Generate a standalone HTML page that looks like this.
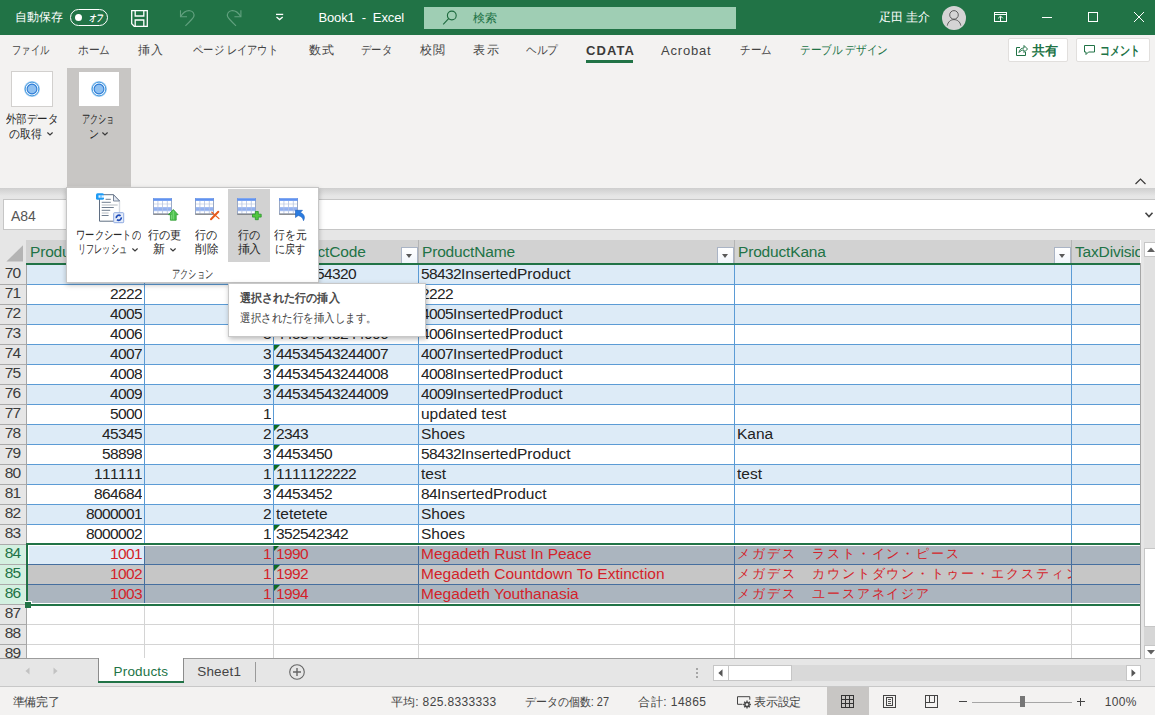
<!DOCTYPE html>
<html lang="ja"><head><meta charset="utf-8"><title>Book1 - Excel</title><style>
*{box-sizing:border-box;margin:0;padding:0}
html,body{width:1155px;height:715px;overflow:hidden;background:#e6e6e6}
body{position:relative;font-family:"Liberation Sans",sans-serif;font-size:12px;color:#444;line-height:1}
.a{position:absolute;white-space:nowrap}
.ui{font-size:12px;color:#444}
.w{color:#fff}
.g{color:#217346}
.b{font-weight:bold}
.c{text-align:center}
.r{text-align:right}
svg{position:absolute;overflow:visible}
/* grid */
.cell{position:absolute;height:19px;line-height:17px;font-size:15.5px;letter-spacing:0;color:#222;white-space:nowrap;overflow:hidden}
.rh{position:absolute;left:0;width:25px;height:19px;line-height:16px;overflow:hidden;font-size:15.5px;letter-spacing:-0.9px;font-kerning:none;text-align:center;color:#3c3c3c}
.hd{position:absolute;top:240px;height:23px;line-height:23px;font-size:15.5px;letter-spacing:-0.17px;color:#217346;white-space:nowrap;overflow:hidden}
.fb{position:absolute;top:247px;width:17px;height:16px;background:linear-gradient(#fff,#f1f5fb);border:1px solid #aab4c5;border-bottom:none}
.fb:after{content:"";position:absolute;left:4px;top:6px;border-left:3.5px solid transparent;border-right:3.5px solid transparent;border-top:4px solid #585858}
.tri{position:absolute;width:0;height:0;border-top:6px solid #0f6b22;border-right:6px solid transparent}
.red{color:#d41f2a}
.n{letter-spacing:-0.62px;font-kerning:none}
</style></head><body>
<div class="a" style="left:0px;top:0px;width:1155px;height:35px;background:#217346;"></div>
<div class="a w" style="left:14.5px;top:11px;font-size:12px;letter-spacing:0.17px">自動保存</div>
<div class="a" style="left:70px;top:9px;width:38px;height:16.5px;border:1px solid #fff;border-radius:9px"></div>
<div class="a" style="left:74.5px;top:13.5px;width:7px;height:7px;border-radius:50%;background:#fff"></div>
<div class="a w b" style="left:88.5px;top:13px;font-size:9.5px;font-style:italic;transform:scaleX(0.725);transform-origin:0 0">オフ</div>
<svg style="left:131px;top:10px" width="17" height="17" viewBox="0 0 17 17" fill="none" stroke="#fff" stroke-width="1.3"><path d="M0.7 0.7h15.6v15.6H3.2L0.7 13.8z"/><path d="M4.2 0.7v5.3h8.6V0.7"/><path d="M4.2 16.3v-6.3h8.6v6.3"/></svg>
<svg style="left:180px;top:10px" width="15" height="16" viewBox="0 0 15 16" fill="none" stroke="#62a17f" stroke-width="1.1"><path d="M0.5 0.2v6.5h6.5"/><path d="M0.7 6.5C3 2.5 6.5 0.3 10 0.7c3 0.4 4.6 3.3 3.8 5.8C13.3 8.3 11 10.5 5.4 15.8"/></svg>
<svg style="left:227px;top:10px" width="15" height="16" viewBox="0 0 15 16" fill="none" stroke="#62a17f" stroke-width="1.1"><path d="M13.9 0.2v6.5H7.4"/><path d="M13.7 6.5C11.4 2.5 7.9 0.3 4.4 0.7 1.4 1.1-0.2 4 0.6 6.5 1.1 8.3 3.4 10.5 9 15.8"/></svg>
<svg style="left:276px;top:13px" width="8" height="8" viewBox="0 0 8 8" fill="none" stroke="#fff" stroke-width="1.3"><path d="M0 1.4h7.2"/><path d="M0.5 4l3.1 2.6L6.7 4"/></svg>
<div class="a w" style="left:318.4px;top:11px;font-size:13px;letter-spacing:-0.12px">Book1&nbsp; -&nbsp; Excel</div>
<div class="a" style="left:424px;top:7px;width:312px;height:22px;background:#9fceb4;"></div>
<svg style="left:442px;top:10px" width="15" height="15" viewBox="0 0 15 15" fill="none" stroke="#1d6a3e" stroke-width="1.1"><circle cx="9.8" cy="5.5" r="4.4"/><path d="M6.6 8.7L1.2 14.4"/></svg>
<div class="a g" style="left:473px;top:12px;font-size:12px;letter-spacing:0px">検索</div>
<div class="a w" style="left:878.7px;top:11px;font-size:12px;letter-spacing:0.11px">疋田 圭介</div>
<div class="a" style="left:942px;top:6px;width:24px;height:24px;border-radius:50%;background:#d4d4d4"></div>
<svg style="left:942px;top:6px" width="24" height="24" viewBox="0 0 24 24" fill="none" stroke="#505050" stroke-width="0.9"><circle cx="12" cy="8.9" r="4.3"/><path d="M5.3 19.6c0.6-3.8 3.4-6 6.7-6s6.2 2.2 6.8 6"/></svg>
<svg style="left:994px;top:12px" width="13" height="10" viewBox="0 0 13 10" fill="none" stroke="#fff" stroke-width="1"><rect x="0.5" y="0.5" width="12" height="9"/><path d="M0.5 2.5h12"/><path d="M6.5 9.5V4.3M4.2 6.3L6.5 4l2.3 2.3"/></svg>
<div class="a" style="left:1042px;top:17px;width:10px;height:1px;background:#fff;"></div>
<div class="a" style="left:1088px;top:12px;width:10px;height:10px;border:1px solid #fff"></div>
<svg style="left:1134px;top:12px" width="10" height="10" viewBox="0 0 10 10" stroke="#fff" stroke-width="1"><path d="M0 0l10 10M10 0L0 10"/></svg>
<div class="a" style="left:0px;top:35px;width:1155px;height:153px;background:#f3f2f1;"></div>
<div class="a ui" style="left:11.8px;top:44px;font-size:12px;transform:scaleX(0.771);transform-origin:0 0">ファイル</div>
<div class="a ui" style="left:77.8px;top:44px;font-size:12px;transform:scaleX(0.894);transform-origin:0 0">ホーム</div>
<div class="a ui" style="left:137.8px;top:44px;font-size:12px;letter-spacing:1.2px">挿入</div>
<div class="a ui" style="left:193px;top:44px;font-size:12px;transform:scaleX(0.856);transform-origin:0 0">ページ レイアウト</div>
<div class="a ui" style="left:308.7px;top:44px;font-size:12px;letter-spacing:0.9px">数式</div>
<div class="a ui" style="left:361px;top:44px;font-size:12px;transform:scaleX(0.861);transform-origin:0 0">データ</div>
<div class="a ui" style="left:419.6px;top:44px;font-size:12px;letter-spacing:1.8px">校閲</div>
<div class="a ui" style="left:473px;top:44px;font-size:12px;letter-spacing:1.6px">表示</div>
<div class="a ui" style="left:526px;top:44px;font-size:12px;transform:scaleX(0.889);transform-origin:0 0">ヘルプ</div>
<div class="a ui" style="left:661px;top:44px;font-size:12px;font-size:13px;letter-spacing:0.8px">Acrobat</div>
<div class="a ui" style="left:740px;top:44px;font-size:12px;transform:scaleX(0.875);transform-origin:0 0">チーム</div>
<div class="a ui" style="left:800px;top:44px;font-size:12px;color:#217346;transform:scaleX(0.886);transform-origin:0 0">テーブル デザイン</div>
<div class="a ui b" style="left:586px;top:44px;font-size:13px;color:#3b3a39;letter-spacing:1.09px">CDATA</div>
<div class="a" style="left:586px;top:60px;width:47px;height:3px;background:#217346;"></div>
<div class="a" style="left:1008px;top:38px;width:60px;height:24px;background:#fff;border:1px solid #e1dfdd;border-radius:2px"></div>
<svg style="left:1016px;top:44px" width="12" height="12" viewBox="0 0 12 12" fill="none" stroke="#217346" stroke-width="1"><path d="M4 3.5H0.5v8h9V8"/><path d="M3 8.5c0.3-3 2.5-4.5 5-4.5V1.5l3.5 3.5-3.5 3.5V6C6 6 4.3 6.8 3 8.5z"/></svg>
<div class="a g b" style="left:1032px;top:45px;font-size:12.5px;letter-spacing:-0.5px">共有</div>
<div class="a" style="left:1076px;top:38px;width:74px;height:24px;background:#fff;border:1px solid #e1dfdd;border-radius:2px"></div>
<svg style="left:1084px;top:45px" width="11" height="11" viewBox="0 0 11 11" fill="none" stroke="#217346" stroke-width="1"><path d="M0.5 0.5h10v6.5H4.5l-2.5 2.5v-2.5H0.5z"/></svg>
<div class="a g b" style="left:1100px;top:45px;font-size:12.5px;transform:scaleX(0.769);transform-origin:0 0">コメント</div>
<div class="a" style="left:11px;top:71px;width:42px;height:36px;background:#fff;border:1px solid #d2d0ce"></div>
<div class="a" style="left:67px;top:68px;width:64px;height:119px;background:#c8c6c4;"></div>
<div class="a" style="left:79px;top:72px;width:40px;height:34px;background:#fff;"></div>
<svg style="left:22.9px;top:79.5px" width="18" height="18" viewBox="0 0 18 18"><circle cx="9" cy="9" r="8" fill="#b9d8f7"/><circle cx="9" cy="9" r="6.9" fill="#eef6fe" stroke="#3c96dc" stroke-width="1"/><circle cx="9" cy="9" r="4.9" fill="#8fc0f0" stroke="#2a7ad6" stroke-width="1.1"/></svg>
<svg style="left:89.8px;top:79.5px" width="18" height="18" viewBox="0 0 18 18"><circle cx="9" cy="9" r="8" fill="#b9d8f7"/><circle cx="9" cy="9" r="6.9" fill="#eef6fe" stroke="#3c96dc" stroke-width="1"/><circle cx="9" cy="9" r="4.9" fill="#8fc0f0" stroke="#2a7ad6" stroke-width="1.1"/></svg>
<div class="a ui" style="left:5.8px;top:113px;font-size:12px;color:#262626;transform:scaleX(0.87);transform-origin:0 0">外部データ</div>
<div class="a ui" style="left:9px;top:128px;font-size:12px;color:#262626;transform:scaleX(0.903);transform-origin:0 0">の取得</div>
<svg style="left:47px;top:131.7px" width="6" height="4" viewBox="0 0 6 4" fill="none" stroke="#3a3a3a" stroke-width="1.2"><path d="M0.4 0.5L3 2.9 5.6 0.5"/></svg>
<div class="a ui" style="left:82.4px;top:113px;font-size:12px;color:#262626;transform:scaleX(0.679);transform-origin:0 0">アクショ</div>
<div class="a ui" style="left:88.6px;top:128px;font-size:12px;color:#262626;transform:scaleX(0.825);transform-origin:0 0">ン</div>
<svg style="left:101.6px;top:131.7px" width="6" height="4" viewBox="0 0 6 4" fill="none" stroke="#3a3a3a" stroke-width="1.2"><path d="M0.4 0.5L3 2.9 5.6 0.5"/></svg>
<svg style="left:1135px;top:178px" width="11" height="7" viewBox="0 0 11 7" fill="none" stroke="#3b3a39" stroke-width="1.2"><path d="M0.5 6L5.5 1l5 5"/></svg>
<div class="a" style="left:0;top:188px;width:1155px;height:8px;background:linear-gradient(#cecece,#e6e6e6)"></div>
<div class="a" style="left:3px;top:199px;width:1160px;height:31px;background:#fff;border:1px solid #c6c6c6"></div>
<div class="a ui" style="left:11px;top:209px;font-size:14px;color:#555;letter-spacing:-0.11px">A84</div>
<svg style="left:1145px;top:212px" width="8" height="6" viewBox="0 0 8 6" fill="none" stroke="#444" stroke-width="1.6"><path d="M0.5 0.8L4 4.5 7.5 0.8"/></svg>
<div class="a" style="left:0px;top:240px;width:1141px;height:419px;background:#fff;"></div>
<div class="a" style="left:0px;top:240px;width:26px;height:419px;background:#e6e6e6;"></div>
<div class="a" style="left:26px;top:240px;width:1114px;height:23px;background:#d2d2d2;"></div>
<div class="a" style="left:0px;top:240px;width:26px;height:24px;background:#e6e6e6;"></div>
<svg style="left:6px;top:244.5px" width="17" height="17" viewBox="0 0 17 17"><path d="M17 0.3v16.2H0.4z" fill="#b4b4b4"/></svg>
<div class="a" style="left:144px;top:240px;width:1px;height:23px;background:#b4b4b4;"></div>
<div class="a" style="left:273px;top:240px;width:1px;height:23px;background:#b4b4b4;"></div>
<div class="a" style="left:418px;top:240px;width:1px;height:23px;background:#b4b4b4;"></div>
<div class="a" style="left:734px;top:240px;width:1px;height:23px;background:#b4b4b4;"></div>
<div class="a" style="left:1071px;top:240px;width:1px;height:23px;background:#b4b4b4;"></div>
<div class="hd" style="left:30px;width:114px">ProductId</div>
<div class="hd" style="left:148px;width:125px">ProductDivisionId</div>
<div class="hd" style="left:277px;width:141px">ProductCode</div>
<div class="hd" style="left:422px;width:312px">ProductName</div>
<div class="hd" style="left:738px;width:333px">ProductKana</div>
<div class="hd" style="left:1075px;width:65px">TaxDivisionId</div>
<div class="fb" style="left:127px"></div>
<div class="fb" style="left:256px"></div>
<div class="fb" style="left:401px"></div>
<div class="fb" style="left:717px"></div>
<div class="fb" style="left:1054px"></div>
<div class="a" style="left:26px;top:263px;width:1114px;height:2px;background:#217346;"></div>
<div class="a" style="left:27px;top:265px;width:1113px;height:19px;background:#ddebf7;"></div>
<div class="rh" style="top:265px;height:19px">70</div>
<div class="cell" style="left:276px;top:265px;width:142px;"><span class="n">4453454320</span></div>
<div class="cell" style="left:421px;top:265px;width:313px;"><span class="n">58432</span>InsertedProduct</div>
<div class="tri" style="left:274px;top:265px"></div>
<div class="rh" style="top:285px;height:19px">71</div>
<div class="cell r" style="left:27px;top:285px;width:115px"><span class="n">2222</span></div>
<div class="cell" style="left:421px;top:285px;width:313px;"><span class="n">2222</span></div>
<div class="a" style="left:27px;top:305px;width:1113px;height:19px;background:#ddebf7;"></div>
<div class="rh" style="top:305px;height:19px">72</div>
<div class="cell r" style="left:27px;top:305px;width:115px"><span class="n">4005</span></div>
<div class="cell" style="left:421px;top:305px;width:313px;"><span class="n">4005</span>InsertedProduct</div>
<div class="rh" style="top:325px;height:19px">73</div>
<div class="cell r" style="left:27px;top:325px;width:115px"><span class="n">4006</span></div>
<div class="cell r" style="left:145px;top:325px;width:126px"><span class="n">3</span></div>
<div class="cell" style="left:276px;top:325px;width:142px;"><span class="n">44534543244006</span></div>
<div class="cell" style="left:421px;top:325px;width:313px;"><span class="n">4006</span>InsertedProduct</div>
<div class="tri" style="left:274px;top:325px"></div>
<div class="a" style="left:27px;top:345px;width:1113px;height:19px;background:#ddebf7;"></div>
<div class="rh" style="top:345px;height:19px">74</div>
<div class="cell r" style="left:27px;top:345px;width:115px"><span class="n">4007</span></div>
<div class="cell r" style="left:145px;top:345px;width:126px"><span class="n">3</span></div>
<div class="cell" style="left:276px;top:345px;width:142px;"><span class="n">44534543244007</span></div>
<div class="cell" style="left:421px;top:345px;width:313px;"><span class="n">4007</span>InsertedProduct</div>
<div class="tri" style="left:274px;top:345px"></div>
<div class="rh" style="top:365px;height:19px">75</div>
<div class="cell r" style="left:27px;top:365px;width:115px"><span class="n">4008</span></div>
<div class="cell r" style="left:145px;top:365px;width:126px"><span class="n">3</span></div>
<div class="cell" style="left:276px;top:365px;width:142px;"><span class="n">44534543244008</span></div>
<div class="cell" style="left:421px;top:365px;width:313px;"><span class="n">4008</span>InsertedProduct</div>
<div class="tri" style="left:274px;top:365px"></div>
<div class="a" style="left:27px;top:385px;width:1113px;height:19px;background:#ddebf7;"></div>
<div class="rh" style="top:385px;height:19px">76</div>
<div class="cell r" style="left:27px;top:385px;width:115px"><span class="n">4009</span></div>
<div class="cell r" style="left:145px;top:385px;width:126px"><span class="n">3</span></div>
<div class="cell" style="left:276px;top:385px;width:142px;"><span class="n">44534543244009</span></div>
<div class="cell" style="left:421px;top:385px;width:313px;"><span class="n">4009</span>InsertedProduct</div>
<div class="tri" style="left:274px;top:385px"></div>
<div class="rh" style="top:405px;height:19px">77</div>
<div class="cell r" style="left:27px;top:405px;width:115px"><span class="n">5000</span></div>
<div class="cell r" style="left:145px;top:405px;width:126px"><span class="n">1</span></div>
<div class="cell" style="left:421px;top:405px;width:313px;">updated test</div>
<div class="a" style="left:27px;top:425px;width:1113px;height:19px;background:#ddebf7;"></div>
<div class="rh" style="top:425px;height:19px">78</div>
<div class="cell r" style="left:27px;top:425px;width:115px"><span class="n">45345</span></div>
<div class="cell r" style="left:145px;top:425px;width:126px"><span class="n">2</span></div>
<div class="cell" style="left:276px;top:425px;width:142px;"><span class="n">2343</span></div>
<div class="cell" style="left:421px;top:425px;width:313px;">Shoes</div>
<div class="cell" style="left:737px;top:425px;width:334px;">Kana</div>
<div class="tri" style="left:274px;top:425px"></div>
<div class="rh" style="top:445px;height:19px">79</div>
<div class="cell r" style="left:27px;top:445px;width:115px"><span class="n">58898</span></div>
<div class="cell r" style="left:145px;top:445px;width:126px"><span class="n">3</span></div>
<div class="cell" style="left:276px;top:445px;width:142px;"><span class="n">4453450</span></div>
<div class="cell" style="left:421px;top:445px;width:313px;"><span class="n">58432</span>InsertedProduct</div>
<div class="tri" style="left:274px;top:445px"></div>
<div class="a" style="left:27px;top:465px;width:1113px;height:19px;background:#ddebf7;"></div>
<div class="rh" style="top:465px;height:19px">80</div>
<div class="cell r" style="left:27px;top:465px;width:115px"><span class="n">111111</span></div>
<div class="cell r" style="left:145px;top:465px;width:126px"><span class="n">1</span></div>
<div class="cell" style="left:276px;top:465px;width:142px;"><span class="n">1111122222</span></div>
<div class="cell" style="left:421px;top:465px;width:313px;">test</div>
<div class="cell" style="left:737px;top:465px;width:334px;">test</div>
<div class="tri" style="left:274px;top:465px"></div>
<div class="rh" style="top:485px;height:19px">81</div>
<div class="cell r" style="left:27px;top:485px;width:115px"><span class="n">864684</span></div>
<div class="cell r" style="left:145px;top:485px;width:126px"><span class="n">3</span></div>
<div class="cell" style="left:276px;top:485px;width:142px;"><span class="n">4453452</span></div>
<div class="cell" style="left:421px;top:485px;width:313px;"><span class="n">84</span>InsertedProduct</div>
<div class="tri" style="left:274px;top:485px"></div>
<div class="a" style="left:27px;top:505px;width:1113px;height:19px;background:#ddebf7;"></div>
<div class="rh" style="top:505px;height:19px">82</div>
<div class="cell r" style="left:27px;top:505px;width:115px"><span class="n">8000001</span></div>
<div class="cell r" style="left:145px;top:505px;width:126px"><span class="n">2</span></div>
<div class="cell" style="left:276px;top:505px;width:142px;">tetetete</div>
<div class="cell" style="left:421px;top:505px;width:313px;">Shoes</div>
<div class="rh" style="top:525px;height:19px">83</div>
<div class="cell r" style="left:27px;top:525px;width:115px"><span class="n">8000002</span></div>
<div class="cell r" style="left:145px;top:525px;width:126px"><span class="n">1</span></div>
<div class="cell" style="left:276px;top:525px;width:142px;"><span class="n">352542342</span></div>
<div class="cell" style="left:421px;top:525px;width:313px;">Shoes</div>
<div class="tri" style="left:274px;top:525px"></div>
<div class="a" style="left:27px;top:545px;width:1113px;height:19px;background:#abb5bf;"></div>
<div class="a" style="left:27px;top:545px;width:117px;height:19px;background:#ddebf7;"></div>
<div class="rh" style="top:545px;height:19px;background:#d3f0e0;color:#217346">84</div>
<div class="cell red r" style="left:27px;top:545px;width:115px"><span class="n">1001</span></div>
<div class="cell red r" style="left:145px;top:545px;width:126px"><span class="n">1</span></div>
<div class="cell red" style="left:276px;top:545px;width:142px;"><span class="n">1990</span></div>
<div class="cell red" style="left:421px;top:545px;width:313px;">Megadeth Rust In Peace</div>
<div class="cell red" style="left:737px;top:545px;width:334px;letter-spacing:1.95px;font-size:13px;">メガデス　ラスト・イン・ピース</div>
<div class="tri" style="left:274px;top:545px"></div>
<div class="a" style="left:27px;top:565px;width:1113px;height:19px;background:#c6c6c6;"></div>
<div class="rh" style="top:565px;height:19px;background:#d3f0e0;color:#217346">85</div>
<div class="cell red r" style="left:27px;top:565px;width:115px"><span class="n">1002</span></div>
<div class="cell red r" style="left:145px;top:565px;width:126px"><span class="n">1</span></div>
<div class="cell red" style="left:276px;top:565px;width:142px;"><span class="n">1992</span></div>
<div class="cell red" style="left:421px;top:565px;width:313px;">Megadeth Countdown To Extinction</div>
<div class="cell red" style="left:737px;top:565px;width:334px;letter-spacing:1.95px;font-size:13px;">メガデス　カウントダウン・トゥー・エクスティンクション</div>
<div class="tri" style="left:274px;top:565px"></div>
<div class="a" style="left:27px;top:585px;width:1113px;height:19px;background:#abb5bf;"></div>
<div class="rh" style="top:585px;height:19px;background:#d3f0e0;color:#217346">86</div>
<div class="cell red r" style="left:27px;top:585px;width:115px"><span class="n">1003</span></div>
<div class="cell red r" style="left:145px;top:585px;width:126px"><span class="n">1</span></div>
<div class="cell red" style="left:276px;top:585px;width:142px;"><span class="n">1994</span></div>
<div class="cell red" style="left:421px;top:585px;width:313px;">Megadeth Youthanasia</div>
<div class="cell red" style="left:737px;top:585px;width:334px;letter-spacing:1.95px;font-size:13px;">メガデス　ユースアネイジア</div>
<div class="tri" style="left:274px;top:585px"></div>
<div class="rh" style="top:605px;height:19px">87</div>
<div class="rh" style="top:625px;height:19px">88</div>
<div class="rh" style="top:645px;height:13px">89</div>
<div class="a" style="left:0px;top:284px;width:26px;height:1px;background:#ababab;"></div>
<div class="a" style="left:27px;top:284px;width:1113px;height:1px;background:#5b9bd5;"></div>
<div class="a" style="left:0px;top:304px;width:26px;height:1px;background:#ababab;"></div>
<div class="a" style="left:27px;top:304px;width:1113px;height:1px;background:#5b9bd5;"></div>
<div class="a" style="left:0px;top:324px;width:26px;height:1px;background:#ababab;"></div>
<div class="a" style="left:27px;top:324px;width:1113px;height:1px;background:#5b9bd5;"></div>
<div class="a" style="left:0px;top:344px;width:26px;height:1px;background:#ababab;"></div>
<div class="a" style="left:27px;top:344px;width:1113px;height:1px;background:#5b9bd5;"></div>
<div class="a" style="left:0px;top:364px;width:26px;height:1px;background:#ababab;"></div>
<div class="a" style="left:27px;top:364px;width:1113px;height:1px;background:#5b9bd5;"></div>
<div class="a" style="left:0px;top:384px;width:26px;height:1px;background:#ababab;"></div>
<div class="a" style="left:27px;top:384px;width:1113px;height:1px;background:#5b9bd5;"></div>
<div class="a" style="left:0px;top:404px;width:26px;height:1px;background:#ababab;"></div>
<div class="a" style="left:27px;top:404px;width:1113px;height:1px;background:#5b9bd5;"></div>
<div class="a" style="left:0px;top:424px;width:26px;height:1px;background:#ababab;"></div>
<div class="a" style="left:27px;top:424px;width:1113px;height:1px;background:#5b9bd5;"></div>
<div class="a" style="left:0px;top:444px;width:26px;height:1px;background:#ababab;"></div>
<div class="a" style="left:27px;top:444px;width:1113px;height:1px;background:#5b9bd5;"></div>
<div class="a" style="left:0px;top:464px;width:26px;height:1px;background:#ababab;"></div>
<div class="a" style="left:27px;top:464px;width:1113px;height:1px;background:#5b9bd5;"></div>
<div class="a" style="left:0px;top:484px;width:26px;height:1px;background:#ababab;"></div>
<div class="a" style="left:27px;top:484px;width:1113px;height:1px;background:#5b9bd5;"></div>
<div class="a" style="left:0px;top:504px;width:26px;height:1px;background:#ababab;"></div>
<div class="a" style="left:27px;top:504px;width:1113px;height:1px;background:#5b9bd5;"></div>
<div class="a" style="left:0px;top:524px;width:26px;height:1px;background:#ababab;"></div>
<div class="a" style="left:27px;top:524px;width:1113px;height:1px;background:#5b9bd5;"></div>
<div class="a" style="left:0px;top:544px;width:26px;height:1px;background:#ababab;"></div>
<div class="a" style="left:27px;top:544px;width:1113px;height:1px;background:#5b9bd5;"></div>
<div class="a" style="left:0px;top:564px;width:26px;height:1px;background:#ababab;"></div>
<div class="a" style="left:27px;top:564px;width:1113px;height:1px;background:#466f9f;"></div>
<div class="a" style="left:0px;top:584px;width:26px;height:1px;background:#ababab;"></div>
<div class="a" style="left:27px;top:584px;width:1113px;height:1px;background:#466f9f;"></div>
<div class="a" style="left:0px;top:604px;width:26px;height:1px;background:#ababab;"></div>
<div class="a" style="left:27px;top:604px;width:1113px;height:1px;background:#5b9bd5;"></div>
<div class="a" style="left:0px;top:624px;width:26px;height:1px;background:#ababab;"></div>
<div class="a" style="left:27px;top:624px;width:1113px;height:1px;background:#d4d4d4;"></div>
<div class="a" style="left:0px;top:644px;width:26px;height:1px;background:#ababab;"></div>
<div class="a" style="left:27px;top:644px;width:1113px;height:1px;background:#d4d4d4;"></div>
<div class="a" style="left:144px;top:265px;width:1px;height:279px;background:#5b9bd5;"></div>
<div class="a" style="left:144px;top:546px;width:1px;height:57px;background:#466f9f;"></div>
<div class="a" style="left:144px;top:606px;width:1px;height:52px;background:#d4d4d4;"></div>
<div class="a" style="left:273px;top:265px;width:1px;height:279px;background:#5b9bd5;"></div>
<div class="a" style="left:273px;top:546px;width:1px;height:57px;background:#466f9f;"></div>
<div class="a" style="left:273px;top:606px;width:1px;height:52px;background:#d4d4d4;"></div>
<div class="a" style="left:418px;top:265px;width:1px;height:279px;background:#5b9bd5;"></div>
<div class="a" style="left:418px;top:546px;width:1px;height:57px;background:#466f9f;"></div>
<div class="a" style="left:418px;top:606px;width:1px;height:52px;background:#d4d4d4;"></div>
<div class="a" style="left:734px;top:265px;width:1px;height:279px;background:#5b9bd5;"></div>
<div class="a" style="left:734px;top:546px;width:1px;height:57px;background:#466f9f;"></div>
<div class="a" style="left:734px;top:606px;width:1px;height:52px;background:#d4d4d4;"></div>
<div class="a" style="left:1071px;top:265px;width:1px;height:279px;background:#5b9bd5;"></div>
<div class="a" style="left:1071px;top:546px;width:1px;height:57px;background:#466f9f;"></div>
<div class="a" style="left:1071px;top:606px;width:1px;height:52px;background:#d4d4d4;"></div>
<div class="a" style="left:26px;top:265px;width:1px;height:393px;background:#a6a6a6;"></div>
<div class="a" style="left:26px;top:543px;width:1114px;height:2px;background:#217346;"></div>
<div class="a" style="left:26px;top:604px;width:1114px;height:2px;background:#217346;"></div>
<div class="a" style="left:26px;top:543px;width:2px;height:62px;background:#217346;"></div>
<div class="a" style="left:28px;top:545px;width:1112px;height:1px;background:#fff;"></div>
<div class="a" style="left:28px;top:603px;width:1112px;height:1px;background:#fff;"></div>
<div class="a" style="left:28px;top:545px;width:1px;height:19px;background:#fff;"></div>
<div class="a" style="left:25px;top:602px;width:6px;height:6px;background:#217346;"></div>
<div class="a" style="left:25px;top:601px;width:7px;height:1px;background:#fff"></div><div class="a" style="left:31px;top:601px;width:1px;height:3px;background:#fff"></div>
<div class="a" style="left:1140px;top:263px;width:1px;height:396px;background:#a6a6a6;"></div>
<div class="a" style="left:0px;top:658px;width:1141px;height:1px;background:#9c9c9c;"></div>
<div class="a" style="left:1141px;top:240px;width:14px;height:419px;background:#e6e6e6;"></div>
<div class="a" style="left:1144px;top:257px;width:11px;height:291px;background:#e1e1e1;"></div>
<div class="a" style="left:1144px;top:627px;width:11px;height:18px;background:#d6d6d6;"></div>
<div class="a" style="left:1144px;top:242px;width:14px;height:15px;background:#fff;border:1px solid #c6c6c6"></div>
<svg style="left:1147px;top:247px" width="8" height="5" viewBox="0 0 8 5"><path d="M0 5L4 0.5 8 5z" fill="#606060"/></svg>
<div class="a" style="left:1144px;top:548px;width:14px;height:79px;background:#fff;border:1px solid #c6c6c6"></div>
<div class="a" style="left:1144px;top:645px;width:14px;height:14px;background:#fff;border:1px solid #c6c6c6"></div>
<svg style="left:1147px;top:650px" width="8" height="5" viewBox="0 0 8 5"><path d="M0 0L4 4.5 8 0z" fill="#606060"/></svg>
<div class="a" style="left:0px;top:659px;width:1155px;height:27px;background:#e6e6e6;"></div>
<div class="a" style="left:0px;top:686px;width:1155px;height:1px;background:#c8c8c8;"></div>
<div class="a" style="left:0px;top:687px;width:1155px;height:28px;background:#f3f2f1;"></div>
<svg style="left:25px;top:667px" width="5" height="8" viewBox="0 0 5 8"><path d="M4.5 0.5v7L0.5 4z" fill="#c2c2c2"/></svg>
<svg style="left:53px;top:667px" width="5" height="8" viewBox="0 0 5 8"><path d="M0.5 0.5v7L4.5 4z" fill="#c2c2c2"/></svg>
<div class="a" style="left:98px;top:658px;width:86px;height:25px;background:#fff;"></div>
<div class="a" style="left:98px;top:658px;width:1px;height:24px;background:#8c8c8c;"></div>
<div class="a" style="left:183px;top:658px;width:1px;height:24px;background:#8c8c8c;"></div>
<div class="a" style="left:98px;top:681px;width:86px;height:2px;background:#217346;"></div>
<div class="a g" style="left:113.6px;top:665px;font-size:13.5px;letter-spacing:0.16px">Products</div>
<div class="a ui" style="left:197.2px;top:665px;font-size:13.5px;color:#444;letter-spacing:0.2px">Sheet1</div>
<div class="a" style="left:255px;top:662px;width:1px;height:20px;background:#9a9a9a;"></div>
<svg style="left:289px;top:664px" width="16" height="16" viewBox="0 0 16 16" fill="none" stroke="#666" stroke-width="1.1"><circle cx="8" cy="8" r="7.3"/><path d="M4 8h8M8 4v8" stroke-width="1.4"/></svg>
<div class="a" style="left:696px;top:668px;width:2px;height:2px;background:#a6a6a6;"></div>
<div class="a" style="left:696px;top:672px;width:2px;height:2px;background:#a6a6a6;"></div>
<div class="a" style="left:696px;top:676px;width:2px;height:2px;background:#a6a6a6;"></div>
<div class="a" style="left:713px;top:665px;width:428px;height:16px;background:#d9d9d9;"></div>
<div class="a" style="left:713px;top:665px;width:16px;height:16px;background:#fff;border:1px solid #c6c6c6"></div>
<svg style="left:718px;top:669px" width="5" height="8" viewBox="0 0 5 8"><path d="M4.5 0.3v7.4L0.3 4z" fill="#555"/></svg>
<div class="a" style="left:728px;top:665px;width:64px;height:16px;background:#fff;border:1px solid #c6c6c6"></div>
<div class="a" style="left:1126px;top:665px;width:15px;height:16px;background:#fff;border:1px solid #c6c6c6"></div>
<svg style="left:1131px;top:669px" width="5" height="8" viewBox="0 0 5 8"><path d="M0.5 0.3v7.4L4.7 4z" fill="#555"/></svg>
<div class="a ui" style="left:12.5px;top:696px;font-size:12px;letter-spacing:-0.33px">準備完了</div>
<div class="a ui" style="left:390.5px;top:696px;font-size:12px;letter-spacing:0.36px">平均: 825.8333333</div>
<div class="a ui" style="left:525.4px;top:696px;font-size:12px;transform:scaleX(0.913);transform-origin:0 0">データの個数: 27</div>
<div class="a ui" style="left:638.2px;top:696px;font-size:12px;letter-spacing:0.47px">合計: 14865</div>
<svg style="left:737px;top:696px" width="15" height="14" viewBox="0 0 15 14" fill="none" stroke="#444" stroke-width="1"><path d="M5.5 8.3H0.5V0.7h12.3v3"/><circle cx="10" cy="8.5" r="2.1" stroke-width="1.5"/><path d="M10 4.6v1.4M10 11v1.4M6.1 8.5h1.4M12.5 8.5h1.4M7.2 5.7l1 1M11.8 10.3l1 1M12.8 5.7l-1 1M8.2 10.3l-1 1" stroke-width="1.3"/></svg>
<div class="a ui" style="left:754.3px;top:696px;font-size:12px;letter-spacing:-0.3px">表示設定</div>
<div class="a" style="left:827px;top:687px;width:42px;height:28px;background:#c8c6c4;"></div>
<svg style="left:841px;top:695px" width="13" height="13" viewBox="0 0 13 13" fill="none" stroke="#333" stroke-width="1"><rect x="0.5" y="0.5" width="12" height="12"/><path d="M4.5 0.5v12M8.5 0.5v12M0.5 4.5h12M0.5 8.5h12"/></svg>
<svg style="left:883px;top:695px" width="13" height="13" viewBox="0 0 13 13" fill="none" stroke="#444" stroke-width="1"><rect x="0.5" y="0.5" width="12" height="12"/><rect x="3.5" y="2.5" width="6" height="8"/><path d="M5 4.5h3M5 6.5h3M5 8.5h3" stroke-width="0.9"/></svg>
<svg style="left:925px;top:695px" width="13" height="13" viewBox="0 0 13 13" fill="none" stroke="#444" stroke-width="1"><rect x="0.5" y="0.5" width="12" height="12"/><path d="M4.5 0.5v7M9.5 0.5v7M0.5 7.5h9"/></svg>
<div class="a" style="left:959px;top:701px;width:8px;height:1px;background:#444;"></div>
<div class="a" style="left:972px;top:702px;width:100px;height:1px;background:#a6a6a6;"></div>
<div class="a" style="left:1020px;top:696px;width:5px;height:11px;background:#767676;"></div>
<div class="a" style="left:1077px;top:701px;width:8px;height:1px;background:#444;"></div>
<div class="a" style="left:1080px;top:698px;width:1px;height:8px;background:#444;"></div>
<div class="a ui" style="left:1104.7px;top:696px;font-size:12px;letter-spacing:0.33px">100%</div>
<div class="a" style="left:66px;top:187px;width:253px;height:96px;background:#fff;border:1px solid #c6c6c6;box-shadow:0 2px 5px rgba(0,0,0,0.25)"></div>
<div class="a" style="left:67px;top:186px;width:64px;height:2px;background:#c8c6c4;"></div>
<div class="a" style="left:228px;top:189px;width:42px;height:73px;background:#d2d2d2;"></div>
<div class="a ui" style="left:76px;top:229px;font-size:12px;color:#262626;transform:scaleX(0.771);transform-origin:0 0">ワークシートの</div>
<div class="a ui" style="left:77.7px;top:243px;font-size:12px;color:#262626;transform:scaleX(0.678);transform-origin:0 0">リフレッシュ</div>
<svg style="left:131.5px;top:247.8px" width="6" height="4" viewBox="0 0 6 4" fill="none" stroke="#3a3a3a" stroke-width="1.2"><path d="M0.4 0.5L3 2.9 5.6 0.5"/></svg>
<div class="a ui" style="left:148px;top:229px;font-size:12px;color:#262626;transform:scaleX(0.931);transform-origin:0 0">行の更</div>
<div class="a ui" style="left:153px;top:243px;font-size:12px;color:#262626;letter-spacing:0px">新</div>
<svg style="left:170px;top:247.8px" width="6" height="4" viewBox="0 0 6 4" fill="none" stroke="#3a3a3a" stroke-width="1.2"><path d="M0.4 0.5L3 2.9 5.6 0.5"/></svg>
<div class="a ui" style="left:195.4px;top:229px;font-size:12px;color:#262626;transform:scaleX(0.929);transform-origin:0 0">行の</div>
<div class="a ui" style="left:195.4px;top:243px;font-size:12px;color:#262626;transform:scaleX(0.962);transform-origin:0 0">削除</div>
<div class="a ui" style="left:237.7px;top:229px;font-size:12px;color:#262626;transform:scaleX(0.929);transform-origin:0 0">行の</div>
<div class="a ui" style="left:237.7px;top:243px;font-size:12px;color:#262626;letter-spacing:-0.7px">挿入</div>
<div class="a ui" style="left:274px;top:229px;font-size:12px;color:#262626;transform:scaleX(0.903);transform-origin:0 0">行を元</div>
<div class="a ui" style="left:275px;top:243px;font-size:12px;color:#262626;transform:scaleX(0.844);transform-origin:0 0">に戻す</div>
<div class="a ui" style="left:171.5px;top:268px;font-size:12px;color:#3a3a3a;transform:scaleX(0.685);transform-origin:0 0">アクション</div>
<svg style="left:95px;top:192px" width="30" height="32" viewBox="0 0 30 32"><path d="M4.5 2.7h14l6 6.3v20.2H4.5z" fill="#fff" stroke="#5f6e82" stroke-width="1"/><path d="M24.5 9v20.2" stroke="#d5d9e0" stroke-width="1.4"/><path d="M18.5 2.7v6.3h6z" fill="#e3e9f3" stroke="#6d7b8e" stroke-width="0.9"/><path d="M10.6 7.3h5.2M6.7 10.3h9.1M6.7 15.5h12.1M6.7 18.3h8.5M6.7 23.5h6.9" stroke="#5f6e82" stroke-width="0.9"/><path d="M6.7 12.9h16M6.7 21h6.9" stroke="#d0d3d8" stroke-width="1.5"/><rect x="1" y="1.2" width="8" height="6.5" rx="1.5" fill="#1e9bf5"/><path d="M3.5 3.3h5.5v2.4H3.5z" fill="#dff0ff"/><path d="M6 3.3v2.4" stroke="#1e9bf5" stroke-width="0.8"/><rect x="18.7" y="20.7" width="10" height="10" rx="0.8" fill="#e6edf9" stroke="#8fabe2" stroke-width="1"/><path d="M21.3 26.2a2.6 2.6 0 0 1 4.3-2.3M26.3 25.3a2.6 2.6 0 0 1-4.3 2.3" fill="none" stroke="#1e4bb8" stroke-width="1.7"/></svg>
<svg style="left:153.2px;top:198px" width="19" height="17" viewBox="0 0 19 17"><rect x="0.5" y="0.5" width="18" height="15.5" fill="#fff" stroke="#9aa9c6" stroke-width="1"/><rect x="0.3" y="0.2" width="18.4" height="2.6" fill="#5a8ef0"/><path d="M1 0.7h17" stroke="#9dbcf8" stroke-width="0.6"/><rect x="1" y="9" width="17" height="4.2" fill="#a3bef4"/><path d="M1 6h17" stroke="#c9d3e6" stroke-width="0.8" fill="none"/><path d="M1 11.1h17" stroke="#7fa2ea" stroke-width="0.9" fill="none"/><path d="M4.9 3v13M9.5 3v13M14.3 3v13" stroke="#b4c2e0" stroke-width="0.8" fill="none"/><path d="M0.3 16.2h18.4" stroke="#707070" stroke-width="1"/></svg>
<svg style="left:167.5px;top:208.5px" width="11" height="12" viewBox="0 0 11 12"><path d="M5.3 0.5l4.8 5.2H8.2v5.5H2.4V5.7H0.5z" fill="#4fc44f" stroke="#2c9c30" stroke-width="0.8"/><path d="M3.4 6v4.5M5.3 2v8.5" stroke="#86dc86" stroke-width="0.8"/></svg>
<svg style="left:195.2px;top:198px" width="19" height="17" viewBox="0 0 19 17"><rect x="0.5" y="0.5" width="18" height="15.5" fill="#fff" stroke="#9aa9c6" stroke-width="1"/><rect x="0.3" y="0.2" width="18.4" height="2.6" fill="#5a8ef0"/><path d="M1 0.7h17" stroke="#9dbcf8" stroke-width="0.6"/><rect x="1" y="9" width="17" height="4.2" fill="#a3bef4"/><path d="M1 6h17" stroke="#c9d3e6" stroke-width="0.8" fill="none"/><path d="M1 11.1h17" stroke="#7fa2ea" stroke-width="0.9" fill="none"/><path d="M4.9 3v13M9.5 3v13M14.3 3v13" stroke="#b4c2e0" stroke-width="0.8" fill="none"/><path d="M0.3 16.2h18.4" stroke="#707070" stroke-width="1"/></svg>
<svg style="left:210px;top:211px" width="10" height="9" viewBox="0 0 10 9" fill="none" stroke="#e8591a" stroke-linecap="round"><path d="M8.3 0.7L1 8.2" stroke-width="2"/><path d="M1.8 1.2l7.2 6.4" stroke-width="1.2"/></svg>
<svg style="left:237px;top:198px" width="19" height="17" viewBox="0 0 19 17"><rect x="0.5" y="0.5" width="18" height="15.5" fill="#fff" stroke="#9aa9c6" stroke-width="1"/><rect x="0.3" y="0.2" width="18.4" height="2.6" fill="#5a8ef0"/><path d="M1 0.7h17" stroke="#9dbcf8" stroke-width="0.6"/><rect x="1" y="9" width="17" height="4.2" fill="#a3bef4"/><path d="M1 6h17" stroke="#c9d3e6" stroke-width="0.8" fill="none"/><path d="M1 11.1h17" stroke="#7fa2ea" stroke-width="0.9" fill="none"/><path d="M4.9 3v13M9.5 3v13M14.3 3v13" stroke="#b4c2e0" stroke-width="0.8" fill="none"/><path d="M0.3 16.2h18.4" stroke="#707070" stroke-width="1"/></svg>
<svg style="left:252px;top:211px" width="10" height="9" viewBox="0 0 10 9"><path d="M3.3 0.5h3v2.7h2.9v2.9H6.3v2.6h-3V6.1H0.5V3.2h2.8z" fill="#52c83e" stroke="#2a962c" stroke-width="0.8"/></svg>
<svg style="left:279.1px;top:198px" width="19" height="17" viewBox="0 0 19 17"><rect x="0.5" y="0.5" width="18" height="15.5" fill="#fff" stroke="#9aa9c6" stroke-width="1"/><rect x="0.3" y="0.2" width="18.4" height="2.6" fill="#5a8ef0"/><path d="M1 0.7h17" stroke="#9dbcf8" stroke-width="0.6"/><rect x="1" y="9" width="17" height="4.2" fill="#a3bef4"/><path d="M1 6h17" stroke="#c9d3e6" stroke-width="0.8" fill="none"/><path d="M1 11.1h17" stroke="#7fa2ea" stroke-width="0.9" fill="none"/><path d="M4.9 3v13M9.5 3v13M14.3 3v13" stroke="#b4c2e0" stroke-width="0.8" fill="none"/><path d="M0.3 16.2h18.4" stroke="#707070" stroke-width="1"/></svg>
<svg style="left:294.5px;top:210px" width="11" height="11" viewBox="0 0 11 11"><path d="M0.5 0.3h7L5.3 2.5c3.5 1.3 5.3 4.3 3.2 8.2-0.6-2.8-2.3-4.5-5.3-5.2L0.5 7.5z" fill="#2a7be0" stroke="#1a5cba" stroke-width="0.6"/></svg>
<div class="a" style="left:228px;top:283px;width:198px;height:54px;background:#fff;border:1px solid #c8c8c8;box-shadow:1px 2px 5px rgba(0,0,0,0.28)"></div>
<div class="a ui b" style="left:240px;top:292px;font-size:12px;color:#4a4a4a;transform:scaleX(0.922);transform-origin:0 0">選択された行の挿入</div>
<div class="a ui" style="left:240px;top:312px;font-size:12px;color:#444;transform:scaleX(0.875);transform-origin:0 0">選択された行を挿入します。</div>
</body></html>
